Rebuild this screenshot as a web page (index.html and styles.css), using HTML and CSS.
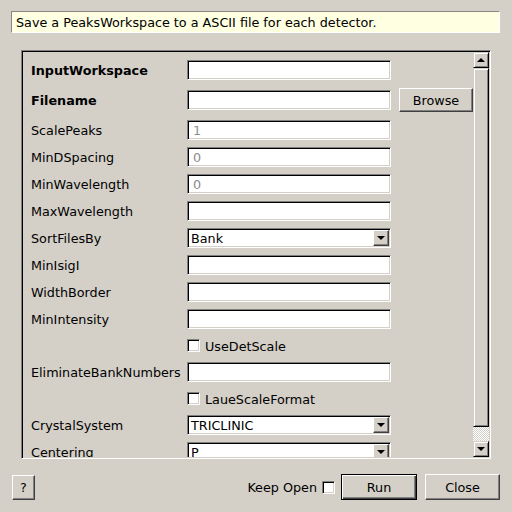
FILE: index.html
```html
<!DOCTYPE html>
<html>
<head>
<meta charset="utf-8">
<link rel="stylesheet" href="styles.css">
</head>
<body>
<div class="dialog">
  <div class="banner">Save a PeaksWorkspace to a ASCII file for each detector.</div>
  <div class="frame">
    <div class="viewport">
      <div class="grid">
        <div class="lbl bold">InputWorkspace</div>
        <div class="input"></div>
        <div></div>

        <div class="lbl bold tall">Filename</div>
        <div class="input mid"></div>
        <div class="btn browse">Browse</div>

        <div class="lbl">ScalePeaks</div>
        <div class="input"><span class="ph">1</span></div>
        <div></div>

        <div class="lbl">MinDSpacing</div>
        <div class="input"><span class="ph">0</span></div>
        <div></div>

        <div class="lbl">MinWavelength</div>
        <div class="input"><span class="ph">0</span></div>
        <div></div>

        <div class="lbl">MaxWavelength</div>
        <div class="input"></div>
        <div></div>

        <div class="lbl">SortFilesBy</div>
        <div class="combo"><span class="val">Bank</span><span class="arrowbtn"><span class="tri-down"></span></span></div>
        <div></div>

        <div class="lbl">MinIsigI</div>
        <div class="input"></div>
        <div></div>

        <div class="lbl">WidthBorder</div>
        <div class="input"></div>
        <div></div>

        <div class="lbl">MinIntensity</div>
        <div class="input"></div>
        <div></div>

        <div class="lbl chkrow"></div>
        <div class="check"><span class="box"></span><span>UseDetScale</span></div>
        <div></div>

        <div class="lbl">EliminateBankNumbers</div>
        <div class="input"></div>
        <div></div>

        <div class="lbl chkrow"></div>
        <div class="check"><span class="box"></span><span>LaueScaleFormat</span></div>
        <div></div>

        <div class="lbl">CrystalSystem</div>
        <div class="combo"><span class="val">TRICLINIC</span><span class="arrowbtn"><span class="tri-down"></span></span></div>
        <div></div>

        <div class="lbl">Centering</div>
        <div class="combo"><span class="val">P</span><span class="arrowbtn"><span class="tri-down"></span></span></div>
        <div></div>
      </div>
    </div>
    <div class="scrollbar">
      <div class="sbtn"><span class="tri-up"></span></div>
      <div class="handle"></div>
      <div class="track"></div>
      <div class="sbtn"><span class="tri-down"></span></div>
    </div>
  </div>
  <div class="footer">
    <div class="btn help">?</div>
    <div class="spacer"></div>
    <span class="keep">Keep Open</span>
    <span class="box keepbox"></span>
    <div class="btn run">Run</div>
    <div class="btn close">Close</div>
  </div>
</div>
</body>
</html>
```

FILE: styles.css
```css
html, body {
  margin: 0;
  padding: 0;
  background: #d4d0c8;
}
body {
  width: 512px;
  height: 512px;
  overflow: hidden;
  font-family: "DejaVu Sans", sans-serif;
  font-size: 12.75px;
  color: #000;
}
.dialog {
  padding: 11px 12px 0 11px;
}
.banner {
  height: 20px;
  line-height: 21px;
  background: #ffffe1;
  border: 1px solid;
  border-color: #8a8884 #ffffff #ffffff #8a8884;
  padding-left: 4px;
  width: 483px;
  white-space: nowrap;
}
.frame {
  margin: 17px 0 0 10px;
  width: 466px;
  height: 405px;
  border: 1px solid;
  border-color: #808080 #ffffff #ffffff #808080;
  box-shadow: inset 1px 1px #000, inset -1px -1px #d4d0c8;
  padding: 1px;
  display: flex;
}
.viewport {
  flex: 1;
  overflow: hidden;
  height: 405px;
}
.grid {
  display: grid;
  grid-template-columns: 148px 204px 74px;
  column-gap: 8px;
  row-gap: 7px;
  padding: 8px 0 0 8px;
  align-items: center;
}
.lbl {
  height: 20px;
  line-height: 22px;
  white-space: nowrap;
}
.lbl.tall { height: 26px; line-height: 28px; }
.lbl.chkrow { height: 19px; }
.bold { font-weight: bold; }
.input, .combo {
  box-sizing: border-box;
  height: 20px;
  background: #fff;
  border: 1px solid;
  border-color: #808080 #ffffff #ffffff #808080;
  box-shadow: inset 1px 1px #000, inset -1px -1px #d4d0c8;
  padding-left: 5px;
  line-height: 19px;
  position: relative;
}
.ph { color: #8c8c8c; }
.combo {
  display: flex;
  align-items: center;
  padding-left: 3px;
}
.combo .val { flex: 1; white-space: nowrap; padding-top: 1px; }
.arrowbtn {
  box-sizing: border-box;
  width: 16px;
  height: 16px;
  margin-right: 1px;
  background: #d4d0c8;
  border: 1px solid;
  border-color: #ffffff #404040 #404040 #ffffff;
  box-shadow: inset -1px -1px #808080;
  display: flex;
  align-items: center;
  justify-content: center;
}
.tri-down {
  width: 0;
  height: 0;
  border-left: 4px solid transparent;
  border-right: 4px solid transparent;
  border-top: 4px solid #000;
}
.tri-up {
  width: 0;
  height: 0;
  border-left: 4px solid transparent;
  border-right: 4px solid transparent;
  border-bottom: 4px solid #000;
}
.btn {
  box-sizing: border-box;
  background: #d4d0c8;
  border: 1px solid;
  border-color: #ffffff #404040 #404040 #ffffff;
  box-shadow: inset -1px -1px #808080;
  display: flex;
  align-items: center;
  justify-content: center;
}
.browse {
  height: 24px;
  width: 74px;
}
.check {
  display: flex;
  align-items: center;
  height: 19px;
  gap: 5px;
}
.check span:last-child { padding-top: 1px; }
.box {
  box-sizing: border-box;
  width: 13px;
  height: 13px;
  background: #fff;
  border: 1px solid;
  border-color: #808080 #ffffff #ffffff #808080;
  box-shadow: inset 1px 1px #000, inset -1px -1px #d4d0c8;
  display: inline-block;
}
.scrollbar {
  width: 16px;
  display: flex;
  flex-direction: column;
}
.sbtn {
  box-sizing: border-box;
  height: 16px;
  background: #d4d0c8;
  border: 1px solid;
  border-color: #d4d0c8 #000 #000 #d4d0c8;
  box-shadow: inset 1px 1px #fff, inset -1px -1px #808080;
  display: flex;
  align-items: center;
  justify-content: center;
}
.handle {
  box-sizing: border-box;
  height: 359px;
  background: #d4d0c8;
  border: 1px solid;
  border-color: #d4d0c8 #000 #000 #d4d0c8;
  box-shadow: inset 1px 1px #fff, inset -1px -1px #808080;
}
.track {
  flex: 1;
  background-color: #d4d0c8;
  background-image: conic-gradient(#fff 25%, #d4d0c8 0 50%, #fff 0 75%, #d4d0c8 0);
  background-size: 2px 2px;
}
.footer {
  display: flex;
  align-items: center;
  margin-top: 15px;
  height: 26px;
  padding-left: 1px;
}
.help {
  width: 23px;
  height: 25px;
  margin-top: 1px;
}
.spacer { flex: 1; }
.keep { margin-right: 5px; }
.keepbox { margin-right: 6px; }
.run {
  width: 76px;
  height: 26px;
  border-color: #000;
  box-shadow: inset 1px 1px #fff, inset -1px -1px #404040, inset -2px -2px #808080;
}
.close {
  width: 75px;
  height: 26px;
  margin-left: 8px;
}
```
